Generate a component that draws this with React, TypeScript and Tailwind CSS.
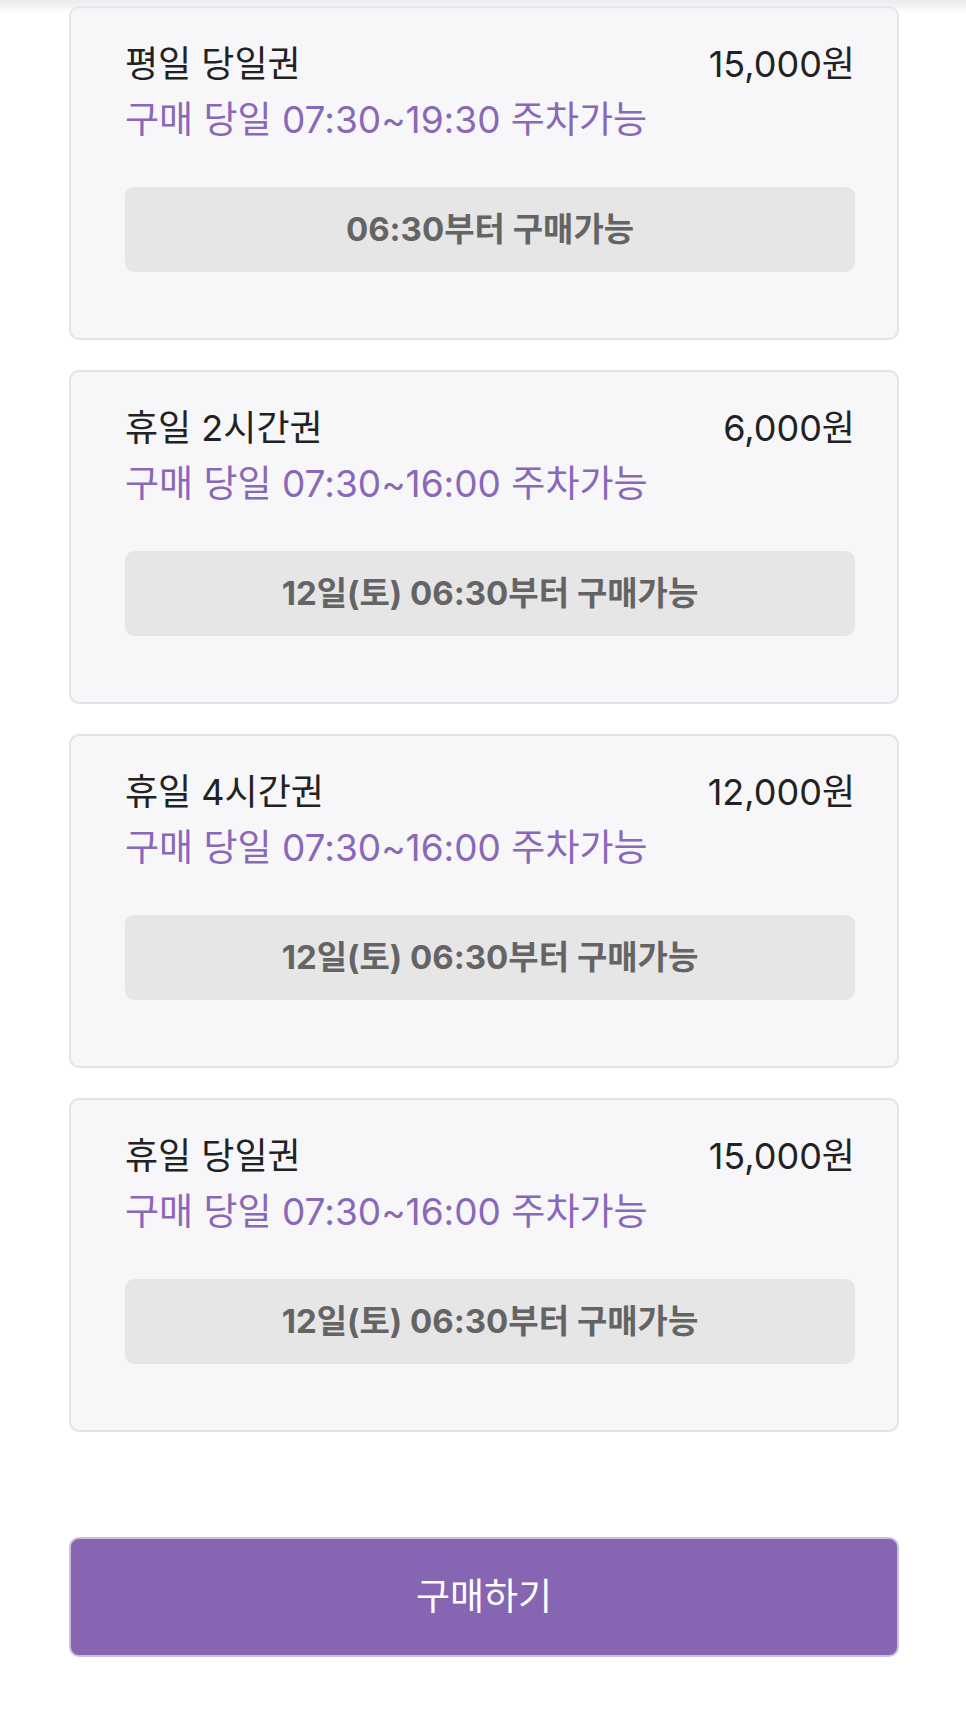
const tickets = [
  {
    name: '평일 당일권',
    price: '15,000원',
    hours: '구매 당일 07:30~19:30 주차가능',
    notice: '06:30부터 구매가능',
  },
  {
    name: '휴일 2시간권',
    price: '6,000원',
    hours: '구매 당일 07:30~16:00 주차가능',
    notice: '12일(토) 06:30부터 구매가능',
  },
  {
    name: '휴일 4시간권',
    price: '12,000원',
    hours: '구매 당일 07:30~16:00 주차가능',
    notice: '12일(토) 06:30부터 구매가능',
  },
  {
    name: '휴일 당일권',
    price: '15,000원',
    hours: '구매 당일 07:30~16:00 주차가능',
    notice: '12일(토) 06:30부터 구매가능',
  },
]

export default function App() {
  return (
    <div className="relative min-h-[1728px] bg-white font-['Inter','Noto_Sans_CJK_KR',sans-serif]">
      {/* header shadow from the sticky bar above */}
      <div className="pointer-events-none absolute inset-x-0 top-0 h-[14px] bg-gradient-to-b from-[#ebebef] to-transparent" />

      <div className="pl-[69px] pr-[67px] pt-[6px]">
        <div className="flex flex-col gap-[30px]">
          {tickets.map((ticket) => (
            <div
              key={ticket.name}
              className="rounded-[10px] border-2 border-[#e3e3e7] bg-[#f7f7f9] pl-[54px] pr-[42px] pt-[34px] pb-[66px]"
            >
              <div className="flex items-center justify-between text-[36px] leading-[44px] text-[#222222]">
                <span>{ticket.name}</span>
                <span>{ticket.price}</span>
              </div>
              <p className="mt-[12px] text-[37px] leading-[44px] text-[#8a67b8]">
                {ticket.hours}
              </p>
              <div className="mt-[45px] flex h-[85px] items-center justify-center rounded-[9px] bg-[#e6e6e6] text-[33px] font-bold text-[#646464]">
                {ticket.notice}
              </div>
            </div>
          ))}
        </div>

        <button className="mt-[105px] flex h-[120px] w-full items-center justify-center rounded-[10px] border-2 border-[#cbc1da] bg-[#8665b3] text-[37px] text-white">
          구매하기
        </button>
      </div>
    </div>
  )
}
